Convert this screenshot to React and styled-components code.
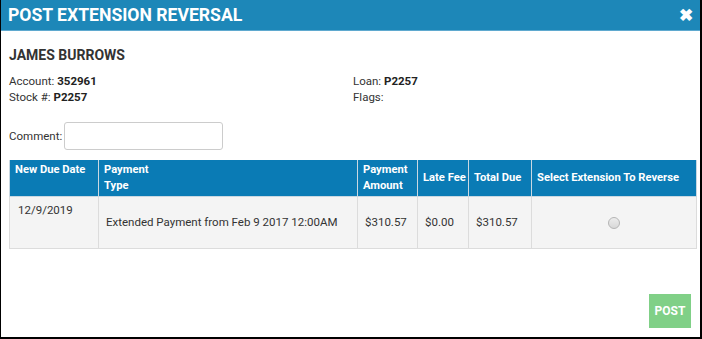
import React from 'react'
import styled, { createGlobalStyle } from 'styled-components'

const Global = createGlobalStyle`
  html, body { margin: 0; padding: 0; background: #fff; }
  body { font-family: Roboto, "Liberation Sans", Arial, sans-serif; }
`

const Modal = styled.div`
  width: 699px;
  height: 337px;
  border-left: 1px solid #000;
  border-right: 2px solid #000;
  border-bottom: 2px solid #000;
  background: #fff;
  display: flex;
  flex-direction: column;
`

const Header = styled.div`
  height: 30px;
  background: #1d87b8;
  border-bottom: 1px solid #5fa9cf;
  display: flex;
  align-items: center;
  justify-content: space-between;
  padding: 0 7px 0 7px;
  color: #fff;
`

const Title = styled.h1`
  margin: 0 0 1px 0;
  font-size: 17.6px;
  font-weight: 700;
`

const Close = styled.span`
  font-size: 17px;
  font-weight: 700;
  line-height: 1;
  margin-top: 1px;
`

const Body = styled.div`
  flex: 1;
  padding: 16px 6px 0 8px;
  display: flex;
  flex-direction: column;
`

const Name = styled.h2`
  margin: 0 0 10px 0;
  font-size: 14px;
  font-weight: 700;
  color: #333;
`

const InfoGrid = styled.div`
  display: grid;
  grid-template-columns: 344px 1fr;
  font-size: 11.5px;
  line-height: 16px;
  color: #333;

  b { font-weight: 700; color: #222; }
`

const CommentRow = styled.label`
  display: flex;
  align-items: center;
  gap: 2px;
  margin: 17px 0 10px 0;
  font-size: 11.5px;
  color: #333;
`

const CommentInput = styled.input`
  width: 159px;
  height: 28px;
  border: 1px solid #ccc;
  border-radius: 3px;
  box-sizing: border-box;
  padding: 0 4px;
`

const Table = styled.table`
  width: 687px;
  table-layout: fixed;
  border-collapse: collapse;
  font-size: 11.5px;
  color: #333;
`

const HeadRow = styled.tr`
  height: 36px;
`

const BodyRow = styled.tr`
  height: 52px;
`

const Th = styled.th`
  background: #0a7bb5;
  color: #fff;
  font-size: 11.2px;
  font-weight: 700;
  text-align: left;
  vertical-align: ${({ $top }) => ($top ? 'top' : 'middle')};
  padding: ${({ $top }) => ($top ? '2px 2px 2px 5px' : '1px 2px 1px 5px')};
  border: 1px solid #c9d8e2;
  border-top: none;
  line-height: 16px;
  white-space: nowrap;
`

const Td = styled.td`
  background: #f4f4f4;
  border: 1px solid #dcdcdc;
  padding: ${({ $top }) => ($top ? '5px 8px' : '1px 7px')};
  vertical-align: ${({ $top }) => ($top ? 'top' : 'middle')};
  text-align: ${({ $center }) => ($center ? 'center' : 'left')};
  line-height: 16px;
`

const Radio = styled.span`
  display: inline-block;
  width: 10px;
  height: 10px;
  border-radius: 50%;
  border: 1px solid #b5b5b5;
  background: linear-gradient(#ececec, #d8d8d8);
  vertical-align: middle;
`

const Footer = styled.div`
  margin-top: auto;
  display: flex;
  justify-content: flex-end;
  padding: 0 3px 9px 0;
`

const PostButton = styled.button`
  width: 42px;
  height: 34px;
  border: none;
  background: #80d087;
  color: #fff;
  font-family: inherit;
  font-size: 12px;
  font-weight: 700;
  padding: 0;
`

const columns = [89, 259, 60, 51, 63, 165]

export default function App() {
  return (
    <>
      <Global />
      <Modal>
        <Header>
          <Title>POST EXTENSION REVERSAL</Title>
          <Close>✖</Close>
        </Header>
        <Body>
          <Name>JAMES BURROWS</Name>
          <InfoGrid>
            <div>Account: <b>352961</b></div>
            <div>Loan: <b>P2257</b></div>
            <div>Stock #: <b>P2257</b></div>
            <div>Flags:</div>
          </InfoGrid>
          <CommentRow>
            Comment: <CommentInput />
          </CommentRow>
          <Table>
            <colgroup>
              {columns.map((w, i) => <col key={i} style={{ width: w }} />)}
            </colgroup>
            <thead>
              <HeadRow>
                <Th $top>New Due Date</Th>
                <Th>Payment<br />Type</Th>
                <Th>Payment<br />Amount</Th>
                <Th>Late Fee</Th>
                <Th>Total Due</Th>
                <Th>Select Extension To Reverse</Th>
              </HeadRow>
            </thead>
            <tbody>
              <BodyRow>
                <Td $top>12/9/2019</Td>
                <Td>Extended Payment from Feb 9 2017 12:00AM</Td>
                <Td>$310.57</Td>
                <Td>$0.00</Td>
                <Td>$310.57</Td>
                <Td $center><Radio /></Td>
              </BodyRow>
            </tbody>
          </Table>
          <Footer>
            <PostButton>POST</PostButton>
          </Footer>
        </Body>
      </Modal>
    </>
  )
}
